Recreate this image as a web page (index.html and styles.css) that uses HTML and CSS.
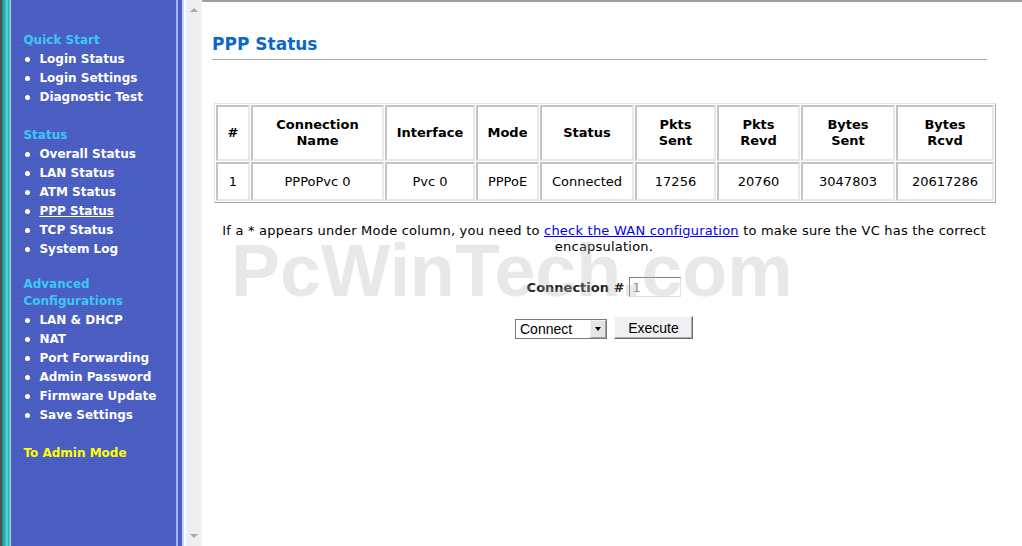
FILE: index.html
```html
<!DOCTYPE html>
<html lang="en">
  <head>
    <meta charset="UTF-8" />
    <title>PPP Status</title>
    <link rel="stylesheet" href="styles.css">
  </head>
  <body>
    <div id="menu-frame">
      <div class="edge"></div>
      <div class="nav">
        <div class="nav-group">
          <div class="nav-title">Quick Start</div>
          <a class="nav-item" href="#">Login Status</a>
          <a class="nav-item" href="#">Login Settings</a>
          <a class="nav-item" href="#">Diagnostic Test</a>
        </div>
        <div class="nav-group">
          <div class="nav-title">Status</div>
          <a class="nav-item" href="#">Overall Status</a>
          <a class="nav-item" href="#">LAN Status</a>
          <a class="nav-item" href="#">ATM Status</a>
          <a class="nav-item current" href="#">PPP Status</a>
          <a class="nav-item" href="#">TCP Status</a>
          <a class="nav-item" href="#">System Log</a>
        </div>
        <div class="nav-group advanced">
          <div class="nav-title">Advanced<br>Configurations</div>
          <a class="nav-item" href="#">LAN &amp; DHCP</a>
          <a class="nav-item" href="#">NAT</a>
          <a class="nav-item" href="#">Port Forwarding</a>
          <a class="nav-item" href="#">Admin Password</a>
          <a class="nav-item" href="#">Firmware Update</a>
          <a class="nav-item" href="#">Save Settings</a>
        </div>
        <div class="nav-group">
          <a class="nav-admin" href="#">To Admin Mode</a>
        </div>
      </div>
      <div class="menu-scroll">
        <span class="arrow up"></span>
        <span class="arrow down"></span>
      </div>
    </div>

    <div id="main-frame">
      <h1>PPP Status</h1>
      <hr>

      <table class="ppp-table">
        <tr>
          <th>#</th>
          <th>Connection<br>Name</th>
          <th>Interface</th>
          <th>Mode</th>
          <th>Status</th>
          <th>Pkts<br>Sent</th>
          <th>Pkts<br>Revd</th>
          <th>Bytes<br>Sent</th>
          <th>Bytes<br>Rcvd</th>
        </tr>
        <tr>
          <td>1</td>
          <td>PPPoPvc 0</td>
          <td>Pvc 0</td>
          <td>PPPoE</td>
          <td>Connected</td>
          <td>17256</td>
          <td>20760</td>
          <td>3047803</td>
          <td>20617286</td>
        </tr>
      </table>

      <p class="note">If a * appears under Mode column, you need to <a href="#">check the WAN configuration</a> to make sure the VC has the correct encapsulation.</p>

      <div class="conn-row">
        <label for="conn">Connection #</label>
        <input id="conn" type="text" value="1" disabled>
      </div>

      <div class="action-row">
        <div class="select-box">
          <select>
            <option>Connect</option>
            <option>Disconnect</option>
          </select>
        </div>
        <button class="execute">Execute</button>
      </div>

      <div class="watermark">PcWinTech.com</div>
    </div>
  </body>
</html>
```

FILE: styles.css
```css
html, body {
  margin: 0;
  padding: 0;
  height: 100%;
  overflow: hidden;
}

body {
  display: flex;
  font-family: "DejaVu Sans", Verdana, sans-serif;
  font-size: 13px;
  background: #fff;
}

/* left menu frame */
#menu-frame {
  display: flex;
  width: 202px;
  flex-shrink: 0;
  height: 546px;
}

.edge {
  width: 12px;
  background: linear-gradient(to right, #505050 0, #505050 2px, #0c9494 2px, #2cb8b8 5px, #6ad8d8 7px, #1aa6a6 9px, #9fd8e8 10px, #b8c4f0 12px);
}

.nav {
  width: 174px;
  padding: 31px 0 0 12px;
  box-sizing: border-box;
  background-color: #4b5fc3;
  background-image: repeating-linear-gradient(to bottom, #4e62c6 0, #4e62c6 1px, #475abd 1px, #475abd 2px);
  border-right: 2px solid #a4b4f4;
  position: relative;
  font-size: 12px;
  font-weight: bold;
}

.nav::after {
  content: "";
  position: absolute;
  top: 0;
  bottom: 0;
  right: -8px;
  width: 6px;
  background: linear-gradient(to right, #4b5fc3 0, #4b5fc3 4px, #c9d3f6 4px);
}

.nav-group {
  margin-bottom: 19px;
}

.nav-group.advanced {
  margin-top: -3px;
}

.nav-title {
  color: #3cc8f4;
  line-height: 17px;
  padding-top: 1px;
  padding-bottom: 1px;
}

.nav-item {
  display: block;
  color: #fff;
  text-decoration: none;
  line-height: 19px;
  padding-left: 16px;
  position: relative;
}

.nav-item::before {
  content: "";
  position: absolute;
  left: 2px;
  top: 7px;
  width: 5px;
  height: 5px;
  border-radius: 50%;
  background: #fff;
}

.nav-item.current {
  text-decoration: underline;
}

.nav-admin {
  display: block;
  color: #ffff00;
  text-decoration: none;
  line-height: 19px;
}

.menu-scroll {
  width: 16px;
  margin-left: 8px;
  background: #efefef;
  border-right: 1px solid #f8f8f8;
  position: relative;
}

.arrow {
  position: absolute;
  left: 4px;
  width: 0;
  height: 0;
  border-left: 4px solid transparent;
  border-right: 4px solid transparent;
}

.arrow.up {
  top: 8px;
  border-bottom: 4px solid #a8a8a8;
}

.arrow.down {
  bottom: 8px;
  border-top: 4px solid #a8a8a8;
}

/* main frame */
#main-frame {
  flex: 1;
  position: relative;
  border-top: 2px solid #a0a0a0;
  padding-left: 10px;
  color: #000;
}

h1 {
  margin: 32px 0 0;
  font-size: 17px;
  line-height: 20px;
  color: #0a68cc;
}

hr {
  width: 775px;
  margin: 5px 0 0;
  border: none;
  border-top: 1px solid #a8a8a8;
  height: 0;
}

.ppp-table {
  margin: 43px 0 0 2px;
  width: 780px;
  table-layout: fixed;
  border-collapse: separate;
  border-spacing: 1px;
  border: 1px solid #a8a8a8;
  border-top-color: #e4e4e4;
  border-left-color: #e4e4e4;
}

.ppp-table th,
.ppp-table td {
  box-sizing: border-box;
  border: 2px solid #e8e8e8;
  border-top-color: #c4c4c4;
  border-left-color: #c4c4c4;
  text-align: center;
  padding: 0 2px;
  font-size: 13px;
}

.ppp-table th {
  height: 56px;
  line-height: 16px;
}

.ppp-table td {
  height: 39px;
}

.ppp-table th:nth-child(1) { width: 34px; }
.ppp-table th:nth-child(2) { width: 133px; }
.ppp-table th:nth-child(3) { width: 90px; }
.ppp-table th:nth-child(4) { width: 63px; }
.ppp-table th:nth-child(5) { width: 94px; }
.ppp-table th:nth-child(6) { width: 81px; }
.ppp-table th:nth-child(7) { width: 83px; }
.ppp-table th:nth-child(8) { width: 94px; }
.ppp-table th:nth-child(9) { width: 98px; }

.note {
  width: 780px;
  margin: 20px 0 0 2px;
  text-align: center;
  line-height: 16px;
  letter-spacing: 0.22px;
}

.note a {
  color: #0000ee;
}

.conn-row {
  width: 780px;
  margin: 22px 0 0 2px;
  display: flex;
  justify-content: center;
  align-items: center;
  gap: 5px;
}

.conn-row label {
  font-weight: bold;
  color: #222;
}

.conn-row input {
  width: 52px;
  height: 20px;
  box-sizing: border-box;
  border: 1px solid #e0e0e0;
  border-top-color: #808080;
  border-left-color: #808080;
  background: #fff;
  font-family: "DejaVu Sans", Verdana, sans-serif;
  font-size: 13px;
  color: #8c8c8c;
  padding: 0 2px;
}

.action-row {
  width: 780px;
  margin: 19px 0 0 2px;
  display: flex;
  justify-content: center;
  align-items: flex-end;
  gap: 7px;
}

.select-box {
  position: relative;
  width: 92px;
  height: 20px;
}

.select-box select {
  appearance: none;
  width: 100%;
  height: 100%;
  box-sizing: border-box;
  border: 1px solid #7a7a7a;
  border-radius: 0;
  background: #fff;
  font-family: "Liberation Sans", Arial, sans-serif;
  font-size: 14px;
  padding: 0 0 0 4px;
  color: #000;
}

.select-box::after {
  content: "";
  position: absolute;
  right: 1px;
  top: 1px;
  width: 16px;
  height: 18px;
  box-sizing: border-box;
  border: 1px solid #a0a0a0;
  border-top-color: #f4f4f4;
  border-left-color: #f4f4f4;
  background: #e4e4e4;
  pointer-events: none;
}

.select-box::before {
  content: "";
  position: absolute;
  right: 6px;
  top: 8px;
  border-left: 3px solid transparent;
  border-right: 3px solid transparent;
  border-top: 4px solid #000;
  z-index: 1;
  pointer-events: none;
}

.execute {
  width: 79px;
  height: 23px;
  box-sizing: border-box;
  background: #f0f0f0;
  border: 1px solid #6a6a6a;
  border-top-color: #fff;
  border-left-color: #fff;
  box-shadow: inset -1px -1px 0 #b0b0b0;
  font-family: "Liberation Sans", Arial, sans-serif;
  font-size: 14px;
  color: #000;
  padding: 0;
}

.watermark {
  position: absolute;
  left: 29px;
  top: 232px;
  font-family: "Liberation Sans", Arial, sans-serif;
  font-weight: bold;
  font-size: 73.5px;
  line-height: 74px;
  color: rgba(180, 180, 180, 0.3);
  pointer-events: none;
  white-space: nowrap;
}
```
